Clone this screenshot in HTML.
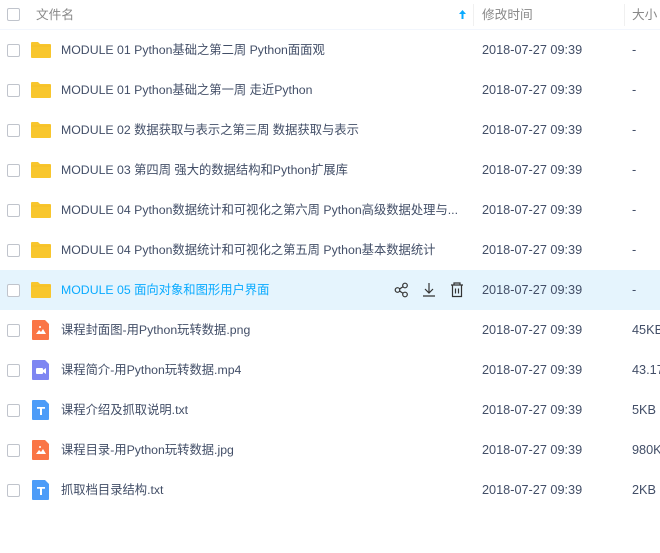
<!DOCTYPE html>
<html><head><meta charset="utf-8"><style>
*{margin:0;padding:0;box-sizing:border-box}
body{width:660px;height:553px;background:#fff;font-family:"Liberation Sans","Noto Sans CJK SC",sans-serif;font-size:12.7px;color:#424e67;overflow:hidden;position:relative}
.hd{position:absolute;left:0;top:0;width:660px;height:30px;border-bottom:1px solid #f2f6fd;color:#888}
.hd span{position:absolute;top:0;line-height:30px}
.sep{position:absolute;top:4px;width:1px;height:22px;background:#f0f0f0}
.cb{position:absolute;left:7px;width:13px;height:13px;border:1px solid #c0c4cc;border-radius:2px;background:#fff}
.row{position:absolute;left:0;width:660px;height:40px}
.row.hl{background:#e5f4fd}
.row .cb{top:14px}
.ic{position:absolute;left:31px;top:11px}
.nm,.dt,.sz{position:absolute;top:0;line-height:40px;white-space:nowrap}
.nm{left:61px;font-size:12.3px}
.dt{left:482px}
.sz{left:632px}
.hl .nm{color:#09aaff}
</style></head><body>
<div class="hd">
<div class="cb" style="top:8px"></div>
<span style="left:36px">文件名</span>
<svg style="position:absolute;left:458px;top:9px" width="9" height="11" viewBox="0 0 9 11"><path d="M4.5 1L1 5h2.5v5h2V5H8z" fill="#09aaff"/></svg>
<div class="sep" style="left:473px"></div>
<span style="left:482px">修改时间</span>
<div class="sep" style="left:624px"></div>
<span style="left:632px">大小</span>
</div>
<div id="rows"></div>
<script>
var F='<svg class="ic" width="20" height="18" viewBox="0 0 20 18"><path d="M0 2a1 1 0 0 1 1-1h6l2 2h10a1 1 0 0 1 1 1v12a1 1 0 0 1-1 1H1a1 1 0 0 1-1-1z" fill="#f8c62d"/><path d="M0 5h20" stroke="#f0b820" stroke-width="0.5"/></svg>';
function doc(c,inner){return '<svg class="ic" width="20" height="20" viewBox="0 0 20 20" style="top:10px;left:31px"><path d="M2 0h12l4 4v15a1 1 0 0 1-1 1H2a1 1 0 0 1-1-1V1a1 1 0 0 1 1-1z" fill="'+c+'"/>'+inner+'</svg>';}
var IMG=doc('#fa7546','<path d="M5 14l3-4 2 2 2-3 3 5z" fill="#fff"/><circle cx="9" cy="7" r="1" fill="#fff"/>');
var VID=doc('#7e86f2','<rect x="5" y="8" width="7" height="6" rx="1" fill="#fff"/><path d="M12 10l3-2v6l-3-2z" fill="#fff"/>');
var TXT=doc('#4d9cf8','<path d="M6 7h8v1.8h-3V15H9V8.8H6z" fill="#fff"/>');
var R=[[F,'MODULE 01 Python基础之第二周 Python面面观','-'],[F,'MODULE 01 Python基础之第一周 走近Python','-'],[F,'MODULE 02 数据获取与表示之第三周 数据获取与表示','-'],[F,'MODULE 03 第四周 强大的数据结构和Python扩展库','-'],[F,'MODULE 04 Python数据统计和可视化之第六周 Python高级数据处理与...','-'],[F,'MODULE 04 Python数据统计和可视化之第五周 Python基本数据统计','-'],[F,'MODULE 05 面向对象和图形用户界面','-'],[IMG,'课程封面图-用Python玩转数据.png','45KB'],[VID,'课程简介-用Python玩转数据.mp4','43.17MB'],[TXT,'课程介绍及抓取说明.txt','5KB'],[IMG,'课程目录-用Python玩转数据.jpg','980KB'],[TXT,'抓取档目录结构.txt','2KB']];
var h='';
R.forEach(function(r,i){
var hl=i==6;
h+='<div class="row'+(hl?' hl':'')+'" style="top:'+(30+40*i)+'px"><div class="cb"></div>'+r[0]+'<span class="nm">'+r[1]+'</span>';
if(hl)h+='<svg style="position:absolute;left:394px;top:12px" width="72" height="16" viewBox="0 0 72 16" fill="none" stroke="#333" stroke-width="1.2"><circle cx="3.5" cy="8" r="2.3"/><circle cx="11" cy="3.5" r="2.3"/><circle cx="11" cy="12.5" r="2.3"/><path d="M5.5 7l3.5-2.3M5.5 9l3.5 2.3"/><path d="M35 1v10M31 7l4 4 4-4M29 14h12"/><path d="M57 3h12M60 3V1h6v2M58.5 3v11.5h9V3M61.5 6.5v5M64.5 6.5v5"/></svg>';
h+='<span class="dt">2018-07-27 09:39</span><span class="sz">'+r[2]+'</span></div>';
});
document.getElementById('rows').innerHTML=h;
</script>
</body></html>
